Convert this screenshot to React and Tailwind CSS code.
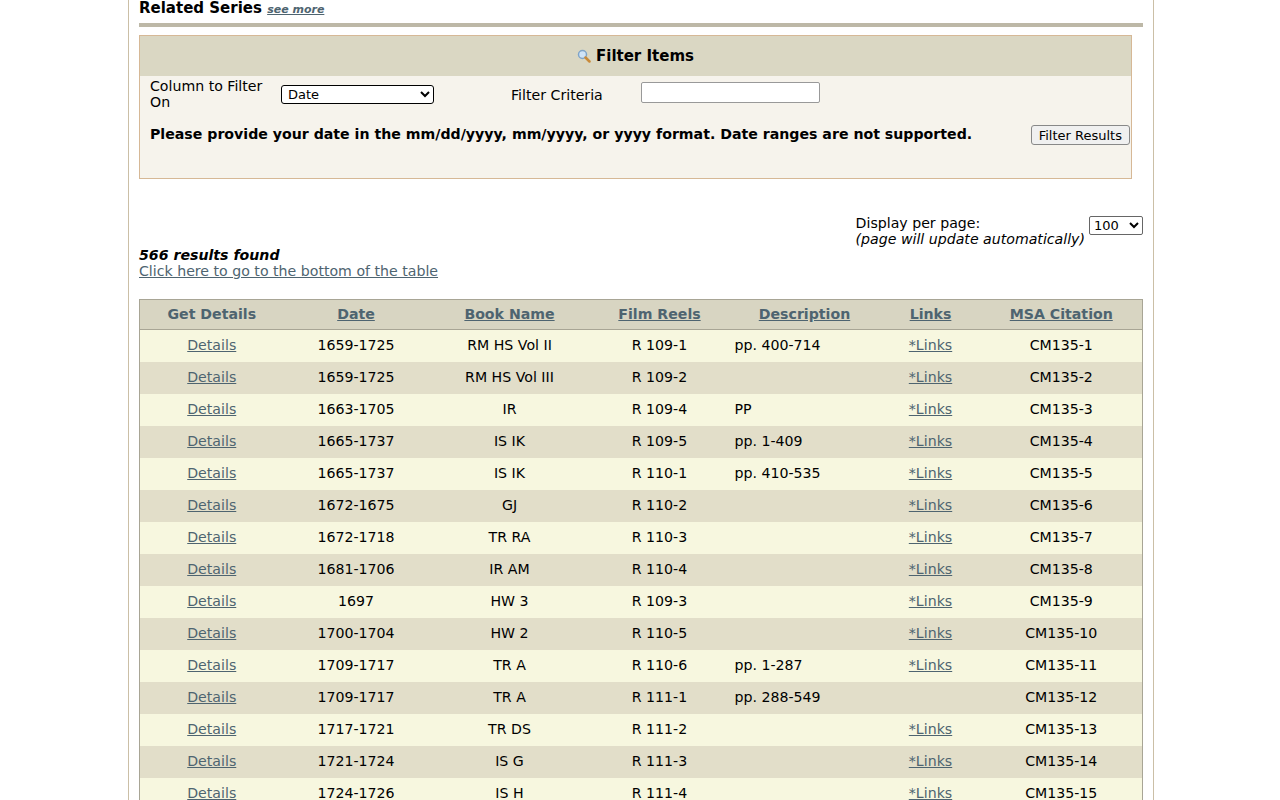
import React from "react";

const rows = [
["1659-1725","RM HS Vol II","R 109-1","pp. 400-714",true,"CM135-1"],
["1659-1725","RM HS Vol III","R 109-2","",true,"CM135-2"],
["1663-1705","IR","R 109-4","PP",true,"CM135-3"],
["1665-1737","IS IK","R 109-5","pp. 1-409",true,"CM135-4"],
["1665-1737","IS IK","R 110-1","pp. 410-535",true,"CM135-5"],
["1672-1675","GJ","R 110-2","",true,"CM135-6"],
["1672-1718","TR RA","R 110-3","",true,"CM135-7"],
["1681-1706","IR AM","R 110-4","",true,"CM135-8"],
["1697","HW 3","R 109-3","",true,"CM135-9"],
["1700-1704","HW 2","R 110-5","",true,"CM135-10"],
["1709-1717","TR A","R 110-6","pp. 1-287",true,"CM135-11"],
["1709-1717","TR A","R 111-1","pp. 288-549",false,"CM135-12"],
["1717-1721","TR DS","R 111-2","",true,"CM135-13"],
["1721-1724","IS G","R 111-3","",true,"CM135-14"],
["1724-1726","IS H","R 111-4","",true,"CM135-15"],
];

const link = "text-[#4e6470] underline";

export default function App() {
  return (
    <div className="h-[800px] overflow-hidden bg-white text-[14.15px] text-black" style={{fontFamily:'"DejaVu Sans", sans-serif'}}>
      <div className="w-[1026px] border-x border-[#cbbfa6] px-[10px] h-full ml-[128px]">
        <div className="font-bold text-[15px] leading-[17px]">Related Series <a className="italic text-[11px] text-[#4e6470] underline">see more</a></div>
        <div className="h-[4px] bg-[#bdb8a7] mt-[5px]"></div>
        <div className="mt-[8px] w-[993px] border border-[#d6b896] bg-[#f6f3ec] h-[144px]">
          <div className="h-[40px] bg-[#dad7c3] flex items-center justify-center font-bold text-[15px]">
            <svg width="14" height="14" viewBox="0 0 14 14" className="mr-[5px]"><circle cx="5.5" cy="5.5" r="4" fill="#cfe3f7" stroke="#7fa4c8" strokeWidth="1.5"/><path d="M8.5 8.5 L12.5 12.5" stroke="#c98a3a" strokeWidth="2.5" strokeLinecap="round"/></svg>
            Filter Items
          </div>
          <div className="flex items-start px-[10px] pt-[2px]">
            <div className="w-[125px] leading-[16px]">Column to Filter On</div>
            <select className="mt-[7px] ml-[6px] w-[153px] h-[19px] border border-black rounded-[3px] bg-white text-[13px] px-[2px]"><option>Date</option></select>
            <div className="ml-[77px] mt-[7px] w-[130px]">Filter Criteria</div>
            <input className="mt-[4px] w-[179px] h-[21px] border border-[#999] rounded-[2px] bg-white" />
          </div>
          <div className="flex items-center justify-between pl-[10px] pr-[1px] mt-[14px]">
            <div className="font-bold">Please provide your date in the mm/dd/yyyy, mm/yyyy, or yyyy format. Date ranges are not supported.</div>
            <button className="h-[20px] px-[7px] border border-[#888] rounded-[3px] bg-[#f0f0f0] text-[13px]">Filter Results</button>
          </div>
        </div>
        <div className="flex justify-end mt-[36px] items-start">
          <div className="leading-[16px]">Display per page:<br/><i>(page will update automatically)</i></div>
          <select className="ml-[4px] mt-[1px] w-[54px] h-[19px] border border-[#666] rounded-[2px] bg-white text-[13px]"><option>100</option></select>
        </div>
        <div className="leading-[16px]">
          <div className="font-bold italic">566 results found</div>
          <a className={link}>Click here to go to the bottom of the table</a>
        </div>
        <table className="mt-[20px] w-[1004px] border-collapse border border-[#a8a595]">
          <thead>
            <tr className="bg-[#d8d5c2] h-[30px] text-[#4e6470] font-bold border-b border-[#a8a595]">
              <th className="w-[144px]">Get Details</th>
              <th className="w-[145px]"><span className="underline">Date</span></th>
              <th className="w-[162px]"><span className="underline">Book Name</span></th>
              <th className="w-[138px]"><span className="underline">Film Reels</span></th>
              <th className="w-[152px]"><span className="underline">Description</span></th>
              <th className="w-[100px]"><span className="underline">Links</span></th>
              <th><span className="underline">MSA Citation</span></th>
            </tr>
          </thead>
          <tbody>
            {rows.map((r,i)=>(
              <tr key={i} className={(i%2===0?"bg-[#f7f7df]":"bg-[#e2dec9]")+" h-[32px]"}>
                <td className="text-center"><a className={link}>Details</a></td>
                <td className="text-center">{r[0]}</td>
                <td className="text-center">{r[1]}</td>
                <td className="text-center">{r[2]}</td>
                <td className="pl-[6px]">{r[3]}</td>
                <td className="text-center">{r[4] && <a className={link}>*Links</a>}</td>
                <td className="text-center">{r[5]}</td>
              </tr>
            ))}
          </tbody>
        </table>
      </div>
    </div>
  );
}
